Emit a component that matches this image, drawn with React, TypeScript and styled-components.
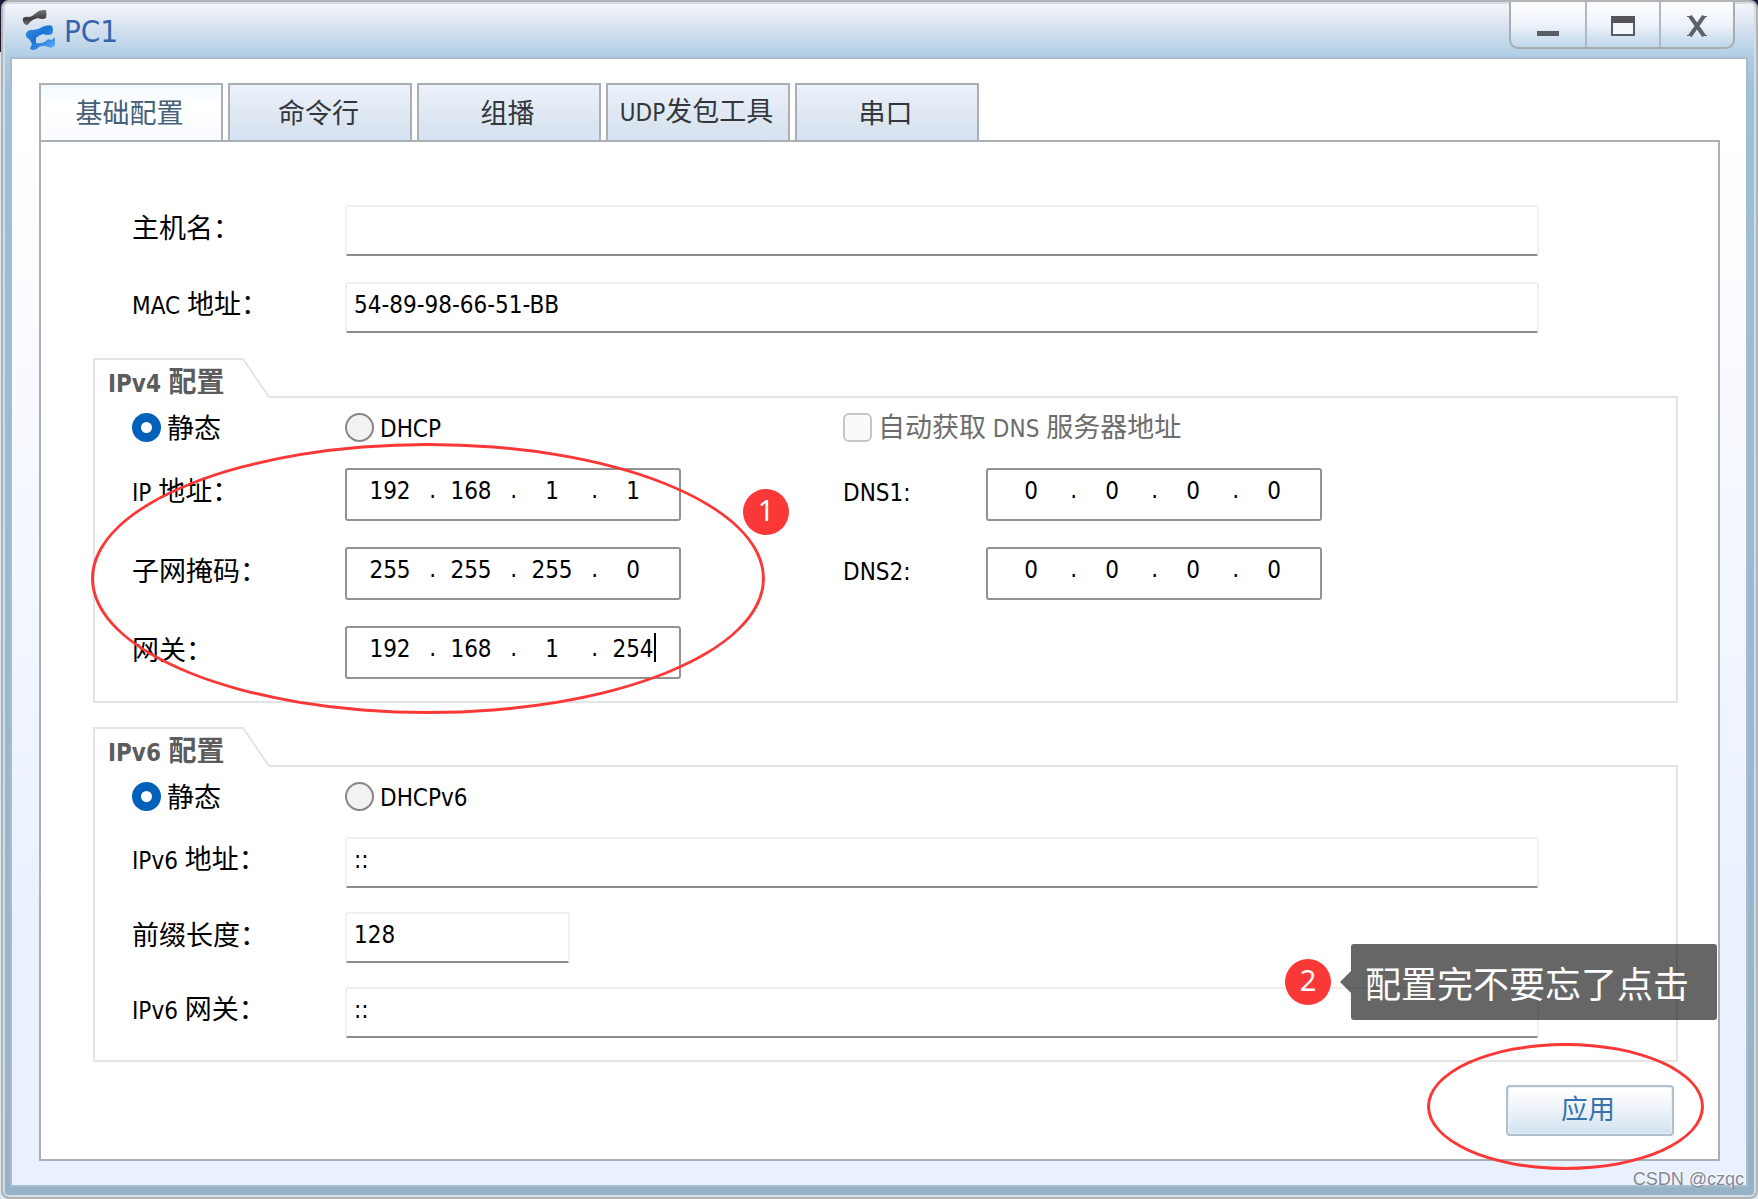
import React, { useState } from "react";
import styled, { createGlobalStyle } from "styled-components";

const sans = `"DejaVu Sans Condensed", "Noto Sans CJK SC", sans-serif`;
const cjk = `"Noto Sans CJK SC", sans-serif`;
const red = "#fb3838";

const GlobalStyle = createGlobalStyle`
  *, *::before, *::after { box-sizing: border-box; }
  body {
    margin: 0;
    background: linear-gradient(#1b1738 52px, #dde7f0 52px);
    font-family: ${sans};
    font-size: 24px;
    color: #000;
  }
  button, input { font: inherit; color: inherit; }
`;

const Window = styled.main`
  display: flex;
  flex-direction: column;
  min-height: 100vh;
  margin-left: 1px;
  border: 2px solid #b3b3b3;
  border-radius: 8px;
  padding: 0 8px 10px 7px;
  background: linear-gradient(#f5f6fc 0, #e6ebf5 14px, #afcde5 55px, #9cc0de 90px, #97b1c7 100%);
  box-shadow: inset 0 0 0 2px #d3dde6;
`;

const TitleBar = styled.header`
  display: flex;
  height: 55px;
  padding: 0 13px 0 12px;
`;

const AppName = styled.h1`
  display: flex;
  align-items: center;
  gap: 8px;
  flex: 1;
  margin: 0;
  padding-top: 3px;
  font-size: 31px;
  font-weight: 400;
  line-height: 36px;
  color: #3465ad;
`;

const Controls = styled.div`
  display: flex;
  height: 47px;
  border: 2px solid #aaacb0;
  border-top: 0;
  border-radius: 0 0 9px 9px;
  background: linear-gradient(#fdfdff, #eef3fa 50%, #bfd6eb);
  overflow: hidden;
`;

const ControlButton = styled.button`
  display: grid;
  place-items: center;
  width: 74px;
  padding: 2px 0 0;
  border: 0;
  background: transparent;
  & + & { border-left: 2px solid #b0b8c0; }
`;

const Content = styled.div`
  display: flex;
  flex-direction: column;
  flex: 1;
  padding: 24px 26px 24px 27px;
  border: 2px solid #a9bccb;
  background: linear-gradient(#fff 5%, #e9f0ff 80%);
`;

const Tabs = styled.div`
  display: flex;
  gap: 5px;
`;

const Tab = styled.button<{ $active: boolean }>`
  width: 184px;
  height: 57px;
  padding: 0 3px 2px 0;
  border: 2px solid #aaafb3;
  border-bottom: 0;
  background: ${(p) =>
    p.$active ? "linear-gradient(#f4faff, #fff 40%, #f9fbff)" : "linear-gradient(#ecf1fb, #dae4ef 75%, #d5e3f6)"};
  color: ${(p) => (p.$active ? "#46607a" : "#33373c")};
  font-family: ${cjk};
  font-size: 27px;
  line-height: 36px;
  white-space: nowrap;
`;

const Latin = styled.span`
  font-family: ${sans};
  font-size: 24px;
`;

const Panel = styled.form`
  display: flex;
  flex-direction: column;
  flex: 1;
  padding: 63px 40px 22px 52px;
  border: 2px solid #aaafb3;
  background: #fff;
`;

const FieldList = styled.div<{ $gap: number }>`
  display: flex;
  flex-direction: column;
  gap: ${(p) => p.$gap}px;
`;

const HostFields = styled(FieldList)`
  padding: 0 139px 25px 39px;
`;

const FieldRow = styled.div`
  display: grid;
  grid-template-columns: 213px minmax(0, 1fr);
  align-items: center;
`;

const Label = styled.label`
  padding-bottom: 7px;
  font-family: ${cjk};
  font-size: 27px;
  line-height: 36px;
  white-space: nowrap;
`;

const TextBox = styled.input<{ $short?: boolean }>`
  width: ${(p) => (p.$short ? "225px" : "100%")};
  height: 51px;
  padding: 0 7px 5px;
  border: 2px solid #efefef;
  border-bottom-color: #8b8b8b;
  border-radius: 3px;
  background: #fff;
  outline: 0;
`;

const GroupBox = styled.section`
  position: relative;
  & + & { margin-top: 24px; }
`;

const GroupHead = styled.div`
  display: flex;
  height: 40px;
  &::after {
    content: "";
    flex: 1;
    border-bottom: 2px solid #e4e4e4;
  }
`;

const GroupTab = styled.div`
  position: relative;
  width: 178px;
  padding: 4px 0 0 15px;
`;

const TabOutline = styled.svg`
  position: absolute;
  inset: 0;
`;

const GroupTitle = styled.h2`
  margin: 0;
  font-family: ${cjk};
  font-size: 28px;
  font-weight: 700;
  line-height: 36px;
  color: #5c5c5c;
`;

const GroupBody = styled.div`
  padding: 14px 137px 22px 37px;
  border: 2px solid #e4e4e4;
  border-top: 0;
`;

const Columns = styled.div`
  display: flex;
  gap: 162px;
`;

const Column = styled.div<{ $label: number }>`
  display: grid;
  grid-template-columns: ${(p) => p.$label}px 336px;
  grid-template-rows: 30px;
  grid-auto-rows: 53px;
  row-gap: 26px;
  align-items: center;
`;

const ChoiceRow = styled.div`
  display: grid;
  grid-template-columns: 213px auto;
  justify-content: start;
  height: 30px;
  margin-bottom: 26px;
`;

const Choice = styled.label<{ $muted?: boolean; $wide?: boolean }>`
  display: flex;
  align-items: center;
  gap: 6px;
  height: 30px;
  ${(p) => p.$wide && "grid-column: 1 / -1;"}
  font-family: ${cjk};
  font-size: 27px;
  line-height: 30px;
  white-space: nowrap;
  color: ${(p) => (p.$muted ? "#6d6d6d" : "#000")};
  & > ${Latin} { padding-top: 3px; }
`;

const Radio = styled.input`
  appearance: none;
  flex: none;
  width: 29px;
  height: 29px;
  margin: 0;
  border: 2px solid #878787;
  border-radius: 50%;
  background: #f2f2f2;
  &:checked {
    border: 9px solid #0160ba;
    background: #fff;
  }
`;

const Checkbox = styled.input`
  appearance: none;
  flex: none;
  width: 29px;
  height: 29px;
  margin: 0;
  border: 2px solid #c6c6c6;
  border-radius: 6px;
  background: #fafafa;
  &:checked { background: #c6c6c6; }
`;

const IpBox = styled.div`
  display: flex;
  height: 53px;
  padding: 0 0 8px 8px;
  border: 2px solid #929292;
  border-radius: 3px;
  background: #fff;
`;

const Octet = styled.span<{ $caret?: boolean }>`
  position: relative;
  display: flex;
  width: 70px;
  &::after {
    content: ${(p) => (p.$caret ? '""' : "none")};
    position: absolute;
    left: 56px;
    top: 5px;
    width: 2px;
    height: 29px;
    background: #000;
  }
`;

const OctetInput = styled.input`
  width: 100%;
  padding: 0;
  border: 0;
  background: transparent;
  text-align: center;
  outline: 0;
`;

const Dot = styled.span`
  width: 11px;
  line-height: 41px;
  text-align: right;
`;

const Footer = styled.div`
  display: flex;
  justify-content: flex-end;
  margin-top: 23px;
  padding-right: 4px;
`;

const ApplyArea = styled.div`
  position: relative;
`;

const ApplyButton = styled.button`
  width: 168px;
  height: 51px;
  padding: 0 4px 5px 0;
  border: 2px solid #b1bfcf;
  border-radius: 4px;
  background: linear-gradient(#fff, #f3f7fb 35%, #d2e2f0);
  box-shadow: inset 0 0 0 1px #e8eff6;
  color: #3872ae;
  font-family: ${cjk};
  font-size: 27px;
  line-height: 36px;
`;

const Ring = styled.div<{ $x: number; $y: number; $w: number; $h: number }>`
  position: absolute;
  left: ${(p) => p.$x}px;
  top: ${(p) => p.$y}px;
  width: ${(p) => p.$w}px;
  height: ${(p) => p.$h}px;
  border: 3px solid ${red};
  border-radius: 50%;
  pointer-events: none;
`;

const Badge = styled.span`
  display: block;
  flex: none;
  width: 46px;
  height: 46px;
  border-radius: 50%;
  background: ${red};
  color: #fff;
  font-family: "Noto Sans", sans-serif;
  font-size: 29px;
  line-height: 42px;
  text-align: center;
`;

const StepOne = styled.div`
  position: absolute;
  left: 650px;
  top: 131px;
`;

const StepTwo = styled.div`
  position: absolute;
  right: -43px;
  top: -141px;
  display: flex;
  align-items: center;
`;

const Arrow = styled.span`
  margin-left: 9px;
  border: 11px solid transparent;
  border-left: 0;
  border-right-color: rgba(0, 0, 0, 0.6);
`;

const Tip = styled.p`
  width: 366px;
  margin: 0;
  padding: 12px 14px;
  border-radius: 3px;
  background: rgba(0, 0, 0, 0.6);
  color: #fff;
  font-family: ${cjk};
  font-size: 36px;
  line-height: 52px;
  white-space: nowrap;
`;

const Watermark = styled.span`
  position: absolute;
  right: 14px;
  bottom: 10px;
  font-family: "Liberation Sans", sans-serif;
  font-size: 18px;
  line-height: 20px;
  color: #85888f;
  text-shadow: -1px -1px 0 #fff;
`;

const Page = styled.div`
  position: relative;
`;

function Mixed({ text }: { text: string }) {
  return (
    <>
      {text.split(/([ -~]+)/).map((part, i) => (i % 2 ? <Latin key={i}>{part}</Latin> : part))}
    </>
  );
}

function Logo() {
  return (
    <svg width="34" height="42" viewBox="0 0 34 42" aria-hidden="true">
      <defs>
        <linearGradient id="bone" x1="0" y1="0" x2="0" y2="1">
          <stop offset="0" stopColor="#77777a" />
          <stop offset="0.6" stopColor="#3c3c3e" />
          <stop offset="1" stopColor="#77777a" />
        </linearGradient>
        <linearGradient id="blue" x1="0" y1="0" x2="1" y2="1">
          <stop offset="0" stopColor="#3a8ee0" />
          <stop offset="0.45" stopColor="#1a73d4" />
          <stop offset="1" stopColor="#63b0fa" />
        </linearGradient>
      </defs>
      <path
        d="M1 8 Q4 6 7 7 Q11 6 14 3 Q17 0 21 0 L24 0 Q25 4 24 8 Q20 10 16 8 Q11 9 8 12 Q6 16 4 15 Q0 13 1 8Z"
        fill="url(#bone)"
      />
      <path
        d="M4 23 Q7 19 11 20 Q16 20 20 17 Q26 14 30 16 Q32 20 30 24 Q26 26 21 24 Q17 25 14 28 L14 33 Q20 34 24 31 Q26 28 29 30 Q33 28 33 27 L33 35 Q30 39 26 37 Q22 35 17 37 Q13 42 8 39 Q8 37 10 35 Q9 31 7 29 Q3 27 4 23Z"
        fill="url(#blue)"
      />
    </svg>
  );
}

function IpField({ id, label, value, caret }: { id: string; label: string; value: string; caret?: boolean }) {
  const octets = value.split(".");
  return (
    <>
      <Label htmlFor={`${id}-0`}>
        <Mixed text={label} />
      </Label>
      <IpBox>
        {octets.map((octet, i) => (
          <React.Fragment key={i}>
            {i > 0 && <Dot>.</Dot>}
            <Octet $caret={caret && i === 3}>
              <OctetInput id={`${id}-${i}`} defaultValue={octet} maxLength={3} aria-label={`${label} ${i + 1}`} />
            </Octet>
          </React.Fragment>
        ))}
      </IpBox>
    </>
  );
}

function TextField({ id, label, value, short }: { id: string; label: string; value: string; short?: boolean }) {
  return (
    <FieldRow>
      <Label htmlFor={id}>
        <Mixed text={label} />
      </Label>
      <TextBox id={id} defaultValue={value} $short={short} />
    </FieldRow>
  );
}

function Group({ id, title, children }: { id: string; title: string; children: React.ReactNode }) {
  return (
    <GroupBox role="group" aria-labelledby={id}>
      <GroupHead>
        <GroupTab>
          <TabOutline width="178" height="40" viewBox="0 0 178 40" aria-hidden="true">
            <path d="M1 40V1H150L176 39H178" fill="none" stroke="#e4e4e4" strokeWidth="2" />
          </TabOutline>
          <GroupTitle id={id}>
            <Mixed text={title} />
          </GroupTitle>
        </GroupTab>
      </GroupHead>
      {children}
    </GroupBox>
  );
}

const tabs = ["基础配置", "命令行", "组播", "UDP发包工具", "串口"];

export default function App() {
  const [active, setActive] = useState(0);
  return (
    <Page>
      <GlobalStyle />
      <Window>
        <TitleBar>
          <AppName>
            <Logo />
            PC1
          </AppName>
          <Controls>
            <ControlButton type="button" aria-label="最小化">
              <svg width="24" height="22" viewBox="0 0 24 22">
                <rect x="1" y="16" width="22" height="5" fill="#5a5c63" />
              </svg>
            </ControlButton>
            <ControlButton type="button" aria-label="最大化">
              <svg width="26" height="22" viewBox="0 0 26 22">
                <rect x="2" y="2" width="22" height="18" fill="#f3f6fa" stroke="#5a5c63" strokeWidth="2" />
                <rect x="1" y="1" width="24" height="7" fill="#53555b" />
              </svg>
            </ControlButton>
            <ControlButton type="button" aria-label="关闭">
              <svg width="20" height="22" viewBox="0 0 20 22">
                <path d="M3 1L17 21M17 1L3 21" stroke="#5f6168" strokeWidth="4" />
                <path d="M0 1.5H5M15 1.5H20M0 20.5H5M15 20.5H20" stroke="#5f6168" strokeWidth="1" />
              </svg>
            </ControlButton>
          </Controls>
        </TitleBar>
        <Content>
          <Tabs role="tablist">
            {tabs.map((tab, i) => (
              <Tab
                key={tab}
                type="button"
                role="tab"
                aria-selected={i === active}
                $active={i === active}
                onClick={() => setActive(i)}
              >
                <Mixed text={tab} />
              </Tab>
            ))}
          </Tabs>
          <Panel onSubmit={(e) => e.preventDefault()}>
            <HostFields $gap={26}>
              <TextField id="host" label="主机名：" value="" />
              <TextField id="mac" label="MAC 地址：" value="54-89-98-66-51-BB" />
            </HostFields>
            <Group id="ipv4" title="IPv4 配置">
              <GroupBody>
                <Columns>
                  <Column $label={213}>
                    <Choice>
                      <Radio type="radio" name="v4" defaultChecked />
                      静态
                    </Choice>
                    <Choice>
                      <Radio type="radio" name="v4" />
                      <Latin>DHCP</Latin>
                    </Choice>
                    <IpField id="ip" label="IP 地址：" value="192.168.1.1" />
                    <IpField id="mask" label="子网掩码：" value="255.255.255.0" />
                    <IpField id="gateway" label="网关：" value="192.168.1.254" caret />
                  </Column>
                  <Column $label={143}>
                    <Choice $muted $wide>
                      <Checkbox type="checkbox" disabled />
                      <span>
                        <Mixed text="自动获取 DNS 服务器地址" />
                      </span>
                    </Choice>
                    <IpField id="dns1" label="DNS1:" value="0.0.0.0" />
                    <IpField id="dns2" label="DNS2:" value="0.0.0.0" />
                  </Column>
                </Columns>
              </GroupBody>
              <Ring $x={-2} $y={85} $w={674} $h={271} />
              <StepOne>
                <Badge>1</Badge>
              </StepOne>
            </Group>
            <Group id="ipv6" title="IPv6 配置">
              <GroupBody>
                <ChoiceRow>
                  <Choice>
                    <Radio type="radio" name="v6" defaultChecked />
                    静态
                  </Choice>
                  <Choice>
                    <Radio type="radio" name="v6" />
                    <Latin>DHCPv6</Latin>
                  </Choice>
                </ChoiceRow>
                <FieldList $gap={24}>
                  <TextField id="v6addr" label="IPv6 地址：" value="::" />
                  <TextField id="prefix" label="前缀长度：" value="128" short />
                  <TextField id="v6gateway" label="IPv6 网关：" value="::" />
                </FieldList>
              </GroupBody>
            </Group>
            <Footer>
              <ApplyArea>
                <ApplyButton type="submit">应用</ApplyButton>
                <Ring $x={-79} $y={-42} $w={277} $h={127} />
                <StepTwo>
                  <Badge>2</Badge>
                  <Arrow />
                  <Tip>配置完不要忘了点击</Tip>
                </StepTwo>
              </ApplyArea>
            </Footer>
          </Panel>
        </Content>
      </Window>
      <Watermark>CSDN @czqc</Watermark>
    </Page>
  );
}
